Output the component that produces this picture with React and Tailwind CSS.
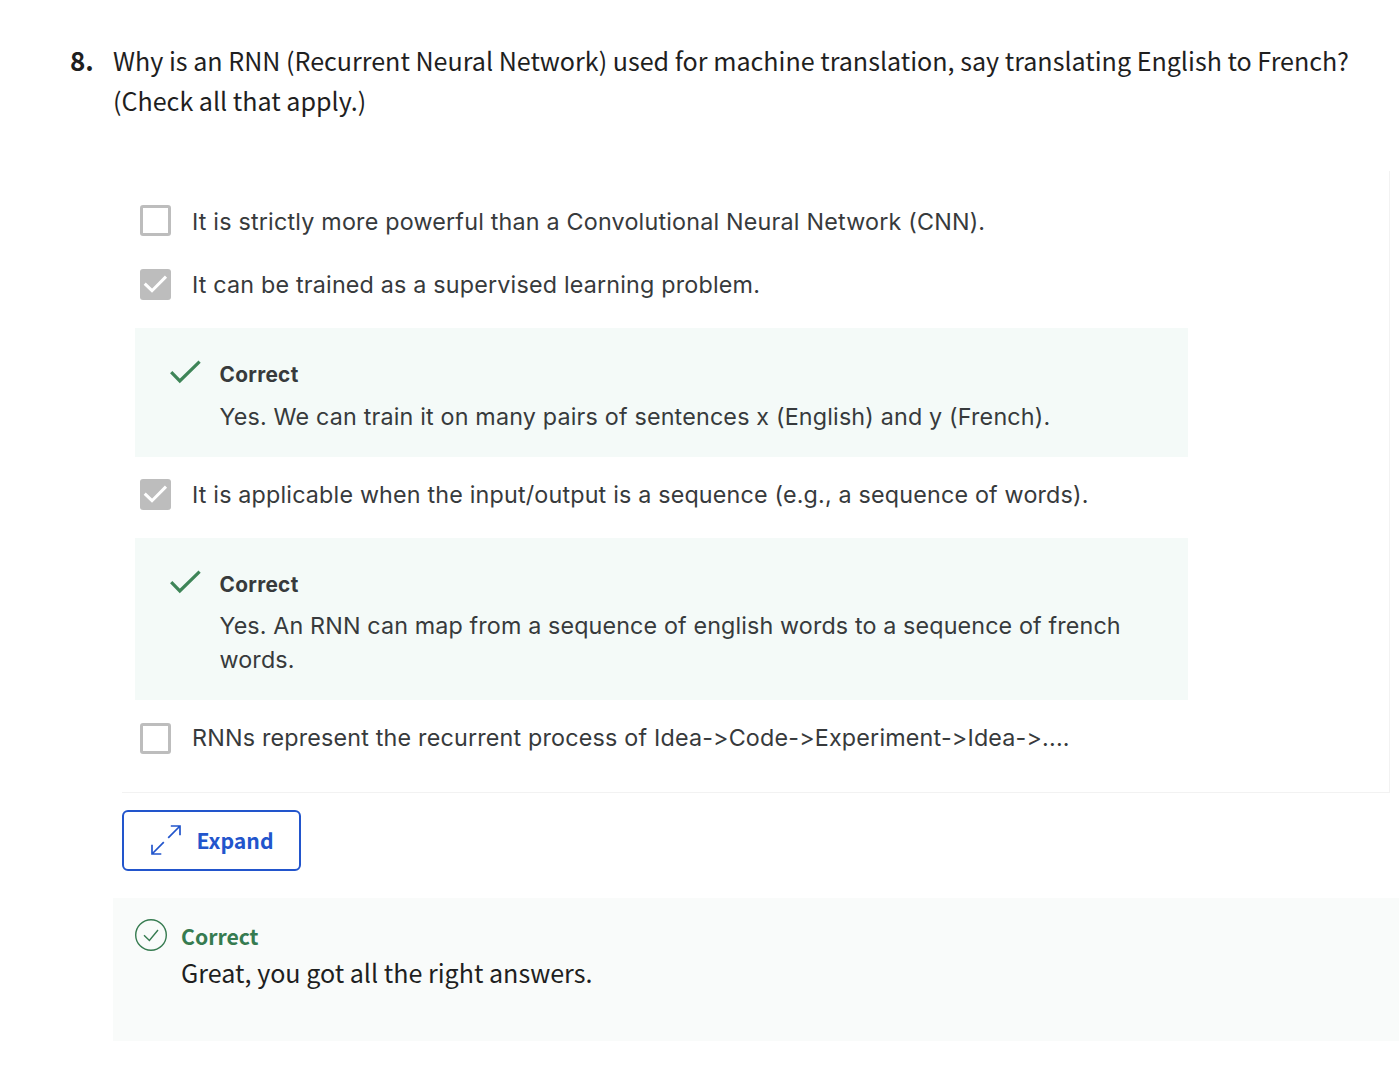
const sourceFont = "font-['Noto_Sans_CJK_SC',sans-serif]";
const interFont = "font-['Inter',sans-serif]";

function Checkbox({ checked }) {
  if (!checked) {
    return <span className="block size-[31px] shrink-0 rounded-[3px] border-3 border-[#bdbdbd] bg-white" />;
  }
  return (
    <span className="block size-[31px] shrink-0 rounded-[3px] bg-[#bdbdbd]">
      <svg viewBox="0 0 31 31" className="size-full" fill="none" stroke="#fff" strokeWidth="3">
        <path d="M4.7 14.6 12 21.7 26 7.6" />
      </svg>
    </span>
  );
}

function Option({ checked, className, textClass, children }) {
  return (
    <div className={`ml-[17px] flex h-[34px] items-center gap-[21px] ${className}`}>
      <Checkbox checked={checked} />
      <span className={`${interFont} whitespace-nowrap text-[23.3px] leading-[34px] text-[#373a3c] ${textClass}`}>
        {children}
      </span>
    </div>
  );
}

function Feedback({ className, textClass, children }) {
  return (
    <div className={`ml-3 flex w-[1053px] bg-[#f4faf8] pl-[34px] ${className}`}>
      <svg viewBox="0 0 32 24" className="mt-8 h-6 w-8 shrink-0" fill="none" stroke="#3e8558" strokeWidth="3.2">
        <path d="M2.2 12.2 10.8 20.9 30.6 1.7" />
      </svg>
      <div className={`${interFont} ml-[18.5px] text-[#373a3c]`}>
        <div className="mt-[30px] text-[20.8px] leading-[34px] font-bold tracking-[0.3px]">Correct</div>
        <div className={`text-[23.3px] leading-[34px] whitespace-nowrap ${textClass}`}>{children}</div>
      </div>
    </div>
  );
}

export default function App() {
  return (
    <main className={`${sourceFont} h-[1086px] w-[1400px] overflow-hidden bg-white text-[#1f1f1f]`}>
      <div className="flex pt-10 pl-[70px] text-[25.08px] leading-[40px]">
        <span className="w-[43px] text-[26px] font-bold">8.</span>
        <p className="whitespace-nowrap">
          Why is an RNN (Recurrent Neural Network) used for machine translation, say translating English to French?
          <br />
          (Check all that apply.)
        </p>
      </div>

      <section className="mt-[51px] ml-[122px] flex h-[622px] w-[1268px] flex-col border-r border-b border-[#f2f2f2] pl-px">
        <Option className="mt-8" textClass="pt-1 tracking-[0.2px]">
          It is strictly more powerful than a Convolutional Neural Network (CNN).
        </Option>
        <Option checked className="mt-[30px]" textClass="pt-0.5 tracking-[0.19px]">
          It can be trained as a supervised learning problem.
        </Option>
        <Feedback className="mt-[27px] h-[129px]" textClass="mt-2 tracking-[0.18px]">
          Yes. We can train it on many pairs of sentences x (English) and y (French).
        </Feedback>
        <Option checked className="mt-5" textClass="pt-0.5 tracking-[0.18px]">
          It is applicable when the input/output is a sequence (e.g., a sequence of words).
        </Option>
        <Feedback className="mt-[27px] h-[162px]" textClass="mt-[7px] tracking-[0.13px]">
          Yes. An RNN can map from a sequence of english words to a sequence of french
          <br />
          words.
        </Feedback>
        <Option className="mt-[21px]" textClass="tracking-[0.19px]">
          {"RNNs represent the recurrent process of Idea->Code->Experiment->Idea->...."}
        </Option>
      </section>

      <button className="mt-[17px] ml-[122px] flex h-[61px] w-[179px] items-center rounded-md border-2 border-[#2255cc] pl-[27px] text-[#2255cc]">
        <svg viewBox="0 0 30 30" className="mb-0.5 size-[30px] shrink-0" fill="none" stroke="currentColor" strokeWidth="1.7">
          <path d="M17.2 12.8 29 1M19.8 1H29v9.3M12.8 17.2 1 29M1 19.8V29h9.3" />
        </svg>
        <span className="mb-0.5 ml-[15.5px] text-[21.2px] leading-8 font-bold">Expand</span>
      </button>

      <section className="mt-[27px] ml-[113px] flex h-[143px] w-[1286px] bg-[#f9fbfa] pl-[22px]">
        <svg viewBox="0 0 32 32" className="mt-[21px] size-8 shrink-0" fill="none" stroke="#367b50" strokeWidth="1.4">
          <circle cx="16" cy="16" r="15.3" />
          <path d="m9 16.2 5.4 5.3L23 11" />
        </svg>
        <div className="mt-[22px] ml-[14px]">
          <div className="text-[21.2px] leading-8 font-bold text-[#367b50]">Correct</div>
          <div className="text-[25.08px] leading-10">Great, you got all the right answers.</div>
        </div>
      </section>
    </main>
  );
}
